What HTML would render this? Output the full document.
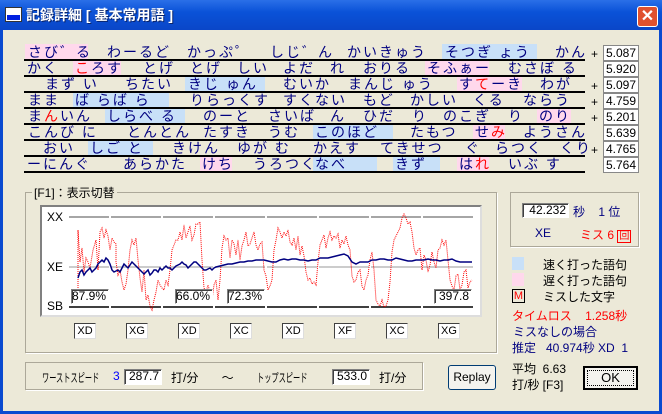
<!DOCTYPE html>
<html><head><meta charset="utf-8"><style>
*{margin:0;padding:0;box-sizing:border-box}
body{width:662px;height:414px;overflow:hidden;background:#ECE9D8;font-family:"Liberation Sans","Noto Sans CJK JP",sans-serif;position:relative}
.a{position:absolute;white-space:nowrap}
#title{left:0;top:0;width:662px;height:30px;background:linear-gradient(#2A6FE8,#0A52D8 40%,#0A46C8);}
#lb{left:0;top:30px;width:3px;height:384px;background:#0A4AD0}
#rb{left:659px;top:30px;width:3px;height:384px;background:#0A4AD0}
#bb{left:0;top:411px;width:662px;height:3px;background:#0A4AD0}
.row{font-size:14px;color:#000080;letter-spacing:2px;height:16px;line-height:16px}
.hl{position:absolute;height:15px}
.pk{background:#FFD8EC}.bl{background:#C8E0F8}
.ln{position:absolute;left:24px;width:561px;height:2px;background:#000}
.nb{position:absolute;left:603px;width:36px;height:16px;background:#fff;border:1px solid #888;font-size:12px;text-align:right;padding-right:2px;line-height:14px;color:#000}
.pl{position:absolute;left:591px;font-size:12px;line-height:12px;margin-top:3px}
.grp{position:absolute;border:1px solid #ACA899;box-shadow:1px 1px 0 #fff}
.sm{font-size:12px}
.bx{position:absolute;background:#fff;border:1px solid #808080;border-right-color:#fff;border-bottom-color:#fff;box-shadow:inset 1px 1px 0 #404040;font-size:12px;text-align:right;padding-right:2px;line-height:13px}
.xb{position:absolute;top:323px;width:22px;height:16px;background:#fff;border:1px solid #404040;border-right-color:#ddd;border-bottom-color:#ddd;font-size:11px;text-align:center;line-height:14px}
.btn{position:absolute;background:#F4F3EE;border:1px solid #003C74;border-radius:3px;font-size:12px;text-align:center}
.r{color:#f00}
.nar{display:inline-block;transform:scaleX(0.6);transform-origin:left center;font-size:12px}
</style></head><body>
<div class="a" id="title"></div>
<div class="a" style="left:5px;top:7px;width:17px;height:15px;background:#fff;border:1px solid #333"><div style="margin:7px 1px 0;height:5px;background:#0020e0"></div></div>
<div class="a" style="left:26px;top:5px;color:#fff;font-size:14px;font-weight:bold;text-shadow:1px 1px 0 #0A246A">記録詳細 [ 基本常用語 ]</div>
<div class="a" style="left:637px;top:6px;width:21px;height:21px;background:#E0512F;border:1px solid #fff;border-radius:3px;color:#fff;font-size:16px;font-weight:bold;text-align:center;line-height:19px">✕</div>
<div class="a" id="lb"></div><div class="a" id="rb"></div><div class="a" id="bb"></div>

<div class="hl pk" style="left:25px;top:44px;width:63px"></div>
<div class="hl bl" style="left:442px;top:44px;width:95px"></div>
<div class="hl pk" style="left:73px;top:61px;width:48px"></div>
<div class="hl pk" style="left:425px;top:61px;width:64px"></div>
<div class="hl bl" style="left:185px;top:77px;width:80px"></div>
<div class="hl pk" style="left:457px;top:77px;width:65px"></div>
<div class="hl bl" style="left:73px;top:93px;width:96px"></div>
<div class="hl bl" style="left:105px;top:109px;width:80px"></div>
<div class="hl pk" style="left:537px;top:109px;width:34px"></div>
<div class="hl bl" style="left:313px;top:125px;width:80px"></div>
<div class="hl pk" style="left:473px;top:125px;width:32px"></div>
<div class="hl bl" style="left:88px;top:141px;width:65px"></div>
<div class="hl pk" style="left:200px;top:157px;width:32px"></div>
<div class="hl bl" style="left:313px;top:157px;width:64px"></div>
<div class="hl bl" style="left:393px;top:157px;width:47px"></div>
<div class="hl pk" style="left:457px;top:157px;width:32px"></div>

<div class="a row" style="top:44px;left:28px">さび゛る</div><div class="a row" style="top:44px;left:107px">わーるど</div><div class="a row" style="top:44px;left:187px">かっぷ゜</div><div class="a row" style="top:44px;left:270px">しじ゛ん</div><div class="a row" style="top:44px;left:347px">かいきゅう</div><div class="a row" style="top:44px;left:445px">そつぎ ょう</div><div class="a row" style="top:44px;left:555px">かん</div>
<div class="a row" style="top:60px;left:27px">かく</div><div class="a row" style="top:60px;left:75px"><span class="r">こ</span>ろす</div><div class="a row" style="top:60px;left:143px">とげ</div><div class="a row" style="top:60px;left:190px">とげ</div><div class="a row" style="top:60px;left:237px">しい</div><div class="a row" style="top:60px;left:283px">よだ</div><div class="a row" style="top:60px;left:330px">れ</div><div class="a row" style="top:60px;left:363px">おりる</div><div class="a row" style="top:60px;left:427px">そふぁー</div><div class="a row" style="top:60px;left:508px">むさぼ る</div>
<div class="a row" style="top:76px;left:45px">まず い</div><div class="a row" style="top:76px;left:125px">ちたい</div><div class="a row" style="top:76px;left:188px">きじ ゅん</div><div class="a row" style="top:76px;left:283px">むいか</div><div class="a row" style="top:76px;left:348px">まんじ ゅう</div><div class="a row" style="top:76px;left:459px">す<span class="r">て</span>ーき</div><div class="a row" style="top:76px;left:540px">わが</div>
<div class="a row" style="top:92px;left:28px">まま</div><div class="a row" style="top:92px;left:75px">ば らば ら</div><div class="a row" style="top:92px;left:190px">りらっくす</div><div class="a row" style="top:92px;left:283px">すくない</div><div class="a row" style="top:92px;left:363px">もど</div><div class="a row" style="top:92px;left:410px">かしい</div><div class="a row" style="top:92px;left:473px">くる</div><div class="a row" style="top:92px;left:523px">ならう</div>
<div class="a row" style="top:108px;left:28px">ま<span class="r">ん</span>いん</div><div class="a row" style="top:108px;left:107px">しらべ る</div><div class="a row" style="top:108px;left:203px">のーと</div><div class="a row" style="top:108px;left:268px">さいば</div><div class="a row" style="top:108px;left:330px">ん</div><div class="a row" style="top:108px;left:363px">ひだ</div><div class="a row" style="top:108px;left:412px">り</div><div class="a row" style="top:108px;left:443px">のこぎ</div><div class="a row" style="top:108px;left:508px">り</div><div class="a row" style="top:108px;left:539px">のり</div>
<div class="a row" style="top:124px;left:28px">こんび に</div><div class="a row" style="top:124px;left:127px">とんとん</div><div class="a row" style="top:124px;left:203px">たすき</div><div class="a row" style="top:124px;left:268px">うむ</div><div class="a row" style="top:124px;left:315px">このほど</div><div class="a row" style="top:124px;left:410px">たもつ</div><div class="a row" style="top:124px;left:475px">せ<span class="r">み</span></div><div class="a row" style="top:124px;left:523px">ようさん</div>
<div class="a row" style="top:140px;left:43px">おい</div><div class="a row" style="top:140px;left:90px">しご と</div><div class="a row" style="top:140px;left:172px">きけん</div><div class="a row" style="top:140px;left:237px">ゆが む</div><div class="a row" style="top:140px;left:313px">かえす</div><div class="a row" style="top:140px;left:380px">てきせつ</div><div class="a row" style="top:140px;left:465px">ぐ</div><div class="a row" style="top:140px;left:495px">らつく</div><div class="a row" style="top:140px;left:560px">くり</div>
<div class="a row" style="top:156px;left:27px">ーにんぐ</div><div class="a row" style="top:156px;left:123px">あらかた</div><div class="a row" style="top:156px;left:202px">けち</div><div class="a row" style="top:156px;left:253px">うろつく</div><div class="a row" style="top:156px;left:315px">なべ</div><div class="a row" style="top:156px;left:395px">きず</div><div class="a row" style="top:156px;left:459px">は<span class="r">れ</span></div><div class="a row" style="top:156px;left:508px">いぶ す</div>

<div class="ln" style="top:59px"></div><div class="ln" style="top:75px"></div><div class="ln" style="top:91px"></div><div class="ln" style="top:107px"></div><div class="ln" style="top:123px"></div><div class="ln" style="top:139px"></div><div class="ln" style="top:155px"></div><div class="ln" style="top:171px"></div>

<div class="pl" style="top:45px">+</div><div class="nb" style="top:45px">5.087</div>
<div class="nb" style="top:61px">5.920</div>
<div class="pl" style="top:77px">+</div><div class="nb" style="top:77px">5.097</div>
<div class="pl" style="top:93px">+</div><div class="nb" style="top:93px">4.759</div>
<div class="pl" style="top:109px">+</div><div class="nb" style="top:109px">5.201</div>
<div class="nb" style="top:125px">5.639</div>
<div class="pl" style="top:141px">+</div><div class="nb" style="top:141px">4.765</div>
<div class="nb" style="top:157px">5.764</div>

<div class="grp" style="left:25px;top:192px;width:472px;height:161px"></div>
<div class="a sm" style="left:32px;top:184px;background:#ECE9D8;padding:0 2px">[F1]：表示切替</div>
<div class="a" style="left:40px;top:205px;width:442px;height:112px;background:#fff;border:2px solid #808080;border-right-color:#ddd;border-bottom-color:#ddd"></div>
<div class="a sm" style="left:47px;top:210px">XX</div><div class="a sm" style="left:47px;top:260px">XE</div><div class="a sm" style="left:47px;top:299px">SB</div>
<svg class="a" style="left:0;top:0" width="662" height="414">
<g stroke-width="1.5">
<path d="M69 217h40M111 217h50M163 217h50M215 217h50M267 217h50M319 217h50M371 217h50M423 217h50" stroke="#888"/>
<path d="M69 267h40M111 267h50M163 267h50M215 267h50M267 267h50M319 267h50M371 267h50M423 267h50" stroke="#bbb"/>
<path d="M69 307h40M111 307h50M163 307h50M215 307h50M267 307h50M319 307h50M371 307h50M423 307h50" stroke="#000"/>
</g>
<polyline fill="none" stroke="#f00" stroke-width="1" stroke-dasharray="1 1" points="78,290 78,230 80,262 82,248 84,272 86,258 88,262 90,268 93,250 96,240 98,270 100,232 102,228 104,238 106,230 108,236 110,250 112,238 114,242 116,244 116,262 118,275 120,270 122,282 124,290 126,284 128,270 130,250 132,240 134,245 136,238 138,260 140,278 142,292 144,270 146,300 148,295 150,306 152,310 154,300 156,292 158,280 160,285 162,288 164,290 166,280 168,285 170,270 172,250 174,245 176,240 178,240 180,232 182,240 184,225 186,238 188,232 190,226 192,240 194,235 196,224 198,224 200,222 202,260 204,288 206,292 208,285 210,292 212,300 214,285 216,280 218,300 220,280 222,248 224,236 226,240 228,238 230,258 232,240 234,244 236,255 238,240 240,260 242,246 244,240 246,232 248,246 250,244 252,238 254,232 256,245 258,250 260,244 262,242 264,270 266,276 268,290 270,286 272,280 274,250 276,240 278,228 280,232 282,238 284,232 286,236 288,230 290,242 292,245 294,238 296,250 298,236 300,255 302,246 304,256 306,272 308,280 310,278 312,284 314,282 316,285 318,262 320,245 322,240 324,235 326,248 328,238 330,232 332,240 334,236 336,238 338,234 340,248 342,240 344,244 346,236 348,245 350,250 352,276 354,282 356,280 358,272 360,270 362,286 364,290 366,280 368,275 370,260 372,252 374,270 376,300 378,304 380,306 382,300 384,307 386,306 388,300 390,282 392,252 394,240 396,236 398,232 400,228 402,218 404,214 406,218 408,224 410,222 412,232 414,248 416,255 418,250 420,248 422,270 424,255 426,260 428,272 430,265 432,252 434,262 436,268 438,250 440,248 442,240 444,245 446,240 448,260 450,280 452,286 454,290 456,276 458,274 460,290 462,285 464,272 466,270 468,288 470,282 472,280"/>
<polyline fill="none" stroke="#000080" stroke-width="1.5" points="78,278 80,272 82,270 84,275 86,272 88,270 90,268 92,272 94,270 96,268 98,264 100,262 102,260 104,262 106,258 108,260 110,264 112,270 114,272 116,271 118,270 120,272 122,268 124,264 126,266 128,268 130,265 132,262 134,264 136,266 138,268 140,270 142,272 144,274 146,272 148,270 150,275 152,273 154,270 156,270 158,272 160,268 162,270 164,268 166,266 168,268 170,268 172,270 174,268 176,266 178,265 180,264 182,262 184,264 186,265 188,268 190,266 192,264 194,262 196,262 198,264 200,266 202,268 204,270 206,270 208,269 210,268 212,270 214,268 216,267 220,266 224,265 228,264 232,264 236,263 240,262 244,262 248,261 252,261 256,260 260,260 264,260 268,261 272,262 276,262 280,260 284,259 288,260 292,259 296,259 300,260 304,260 308,261 312,260 316,260 320,258 324,258 328,258 332,257 336,256 340,255 344,254 348,256 352,262 356,264 360,262 364,262 368,262 372,260 376,260 380,259 384,259 388,260 392,260 396,258 400,259 404,260 408,261 412,261 416,260 420,260 424,260 428,259 432,260 436,260 440,261 444,260 448,260 452,259 456,261 460,262 464,262 472,262"/>
</svg>
<div class="bx" style="left:71px;top:289px;width:38px;height:15px">87.9%</div>
<div class="bx" style="left:175px;top:289px;width:38px;height:15px">66.0%</div>
<div class="bx" style="left:227px;top:289px;width:38px;height:15px">72.3%</div>
<div class="bx" style="left:434px;top:289px;width:38px;height:15px">397.8</div>
<div class="xb" style="left:74px">XD</div><div class="xb" style="left:126px">XG</div><div class="xb" style="left:178px">XD</div><div class="xb" style="left:230px">XC</div><div class="xb" style="left:282px">XD</div><div class="xb" style="left:334px">XF</div><div class="xb" style="left:386px">XC</div><div class="xb" style="left:438px">XG</div>

<div class="grp" style="left:510px;top:192px;width:129px;height:55px"></div>
<div class="bx" style="left:522px;top:203px;width:47px;height:15px">42.232</div>
<div class="a sm" style="left:573px;top:203px;color:#000080">秒 &nbsp;&nbsp; 1 位</div>
<div class="a sm" style="left:535px;top:226px;color:#000080">XE</div>
<div class="a sm" style="left:580px;top:226px;color:#f00">ミス 6 <span style="border:1px solid #f00;font-size:10px;padding:0 1px">回</span></div>
<div class="a" style="left:512px;top:257px;width:12px;height:13px;background:#C8E0F8"></div>
<div class="a" style="left:512px;top:273px;width:12px;height:13px;background:#FFD8EC"></div>
<div class="a" style="left:512px;top:289px;width:13px;height:14px;border:1px solid #000;color:#f00;font-size:11px;text-align:center;line-height:12px">M</div>
<div class="a sm" style="left:543px;top:256px">速く打った語句</div>
<div class="a sm" style="left:543px;top:272px">遅く打った語句</div>
<div class="a sm" style="left:543px;top:288px">ミスした文字</div>
<div class="a sm" style="left:512px;top:307px;color:#f00">タイムロス &nbsp;&nbsp; 1.258秒</div>
<div class="a sm" style="left:513px;top:323px;color:#000080">ミスなしの場合</div>
<div class="a sm" style="left:512px;top:339px;color:#000080">推定 &nbsp; 40.974秒 XD &nbsp;1</div>
<div class="a sm" style="left:512px;top:360px">平均 &nbsp;6.63</div>
<div class="a sm" style="left:512px;top:376px">打/秒 [F3]</div>
<div class="btn" style="left:583px;top:366px;width:55px;height:24px;border:2px solid #000;border-radius:0;line-height:20px;font-size:13px"><div style="position:absolute;left:2px;top:2px;right:2px;bottom:2px;border:1px dotted #000"></div>OK</div>

<div class="grp" style="left:25px;top:362px;width:398px;height:28px"></div>
<div class="a" style="left:42px;top:369px"><span class="nar">ワーストスピード</span></div>
<div class="a" style="left:113px;top:369px;font-size:12px;color:#00f">3</div>
<div class="bx" style="left:124px;top:369px;width:38px;height:16px">287.7</div>
<div class="a sm" style="left:171px;top:369px">打/分 &nbsp;&nbsp;&nbsp;&nbsp;&nbsp; ～</div>
<div class="a" style="left:257px;top:369px"><span class="nar">トップスピード</span></div>
<div class="bx" style="left:332px;top:369px;width:38px;height:16px">533.0</div>
<div class="a sm" style="left:379px;top:369px">打/分</div>
<div class="btn" style="left:448px;top:365px;width:48px;height:25px;line-height:23px">Replay</div>
</body></html>
